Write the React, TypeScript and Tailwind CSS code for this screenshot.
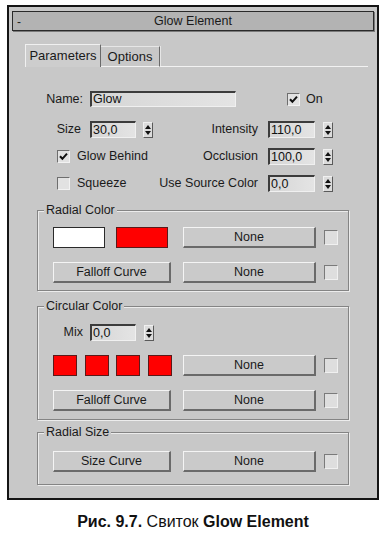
const ui = { fontFamily: '"Liberation Sans", Arial, sans-serif' };

function Check({ on = false }: { on?: boolean }) {
  return (
    <div className="w-[13px] h-[13px] shrink-0 border-t border-l border-[#6e6e6e] border-b border-r border-b-[#f2f2f2] border-r-[#f2f2f2] bg-[#e2e2e2] flex items-center justify-center">
      {on && (
        <svg width="9" height="9" viewBox="0 0 9 9">
          <path d="M1 4.2 L3.4 6.8 L8 1.6" stroke="#111" strokeWidth="2" fill="none" />
        </svg>
      )}
    </div>
  );
}

function Field({ value, w, h = 17 }: { value: string; w: number; h?: number }) {
  return (
    <div
      className="shrink-0 border-t-2 border-l-2 border-t-[#3c3c3c] border-l-[#3c3c3c] border-b border-r border-b-[#f0f0f0] border-r-[#f0f0f0] bg-gradient-to-r from-[#d6d6d6] to-[#e4e4e4] pl-[1px] flex items-center text-[12.5px] text-[#111] leading-none"
      style={{ width: w, height: h }}
    >
      {value}
    </div>
  );
}

function Spinner() {
  return (
    <div className="w-[10px] h-[16px] shrink-0 border-l border-t border-[#f0f0f0] border-r border-b border-r-[#5a5a5a] border-b-[#5a5a5a] bg-[#dcdcdc] flex flex-col items-center justify-center gap-[2px]">
      <svg width="6" height="4" viewBox="0 0 6 4">
        <path d="M3 0 L6 4 L0 4 Z" fill="#111" />
      </svg>
      <svg width="6" height="4" viewBox="0 0 6 4">
        <path d="M0 0 L6 0 L3 4 Z" fill="#111" />
      </svg>
    </div>
  );
}

function Button({ label, w }: { label: string; w: number }) {
  return (
    <div
      className="h-[21px] shrink-0 border-t border-l border-[#f4f4f4] border-r-2 border-b-2 border-r-[#6a6a6a] border-b-[#6a6a6a] bg-[#cacaca] flex items-center justify-center text-[12.5px] text-[#1a1a1a]"
      style={{ width: w }}
    >
      {label}
    </div>
  );
}

function Group({ title, children, className }: { title: string; children: React.ReactNode; className: string }) {
  return (
    <div className={`relative ml-[28px] w-[312px] border border-[#848484] shadow-[inset_1px_1px_0_#ececec,1px_1px_0_#ececec] ${className}`}>
      <span className="absolute left-[6px] -top-[8px] bg-[#c8c8c8] px-[2px] leading-[14px] text-[12.5px] text-[#1a1a1a]">
        {title}
      </span>
      {children}
    </div>
  );
}

function NoneRow({ gap = 12 }: { gap?: number }) {
  return (
    <>
      <div style={{ marginLeft: gap }}>
        <Button label="None" w={133} />
      </div>
      <div className="ml-[8px]">
        <div className="w-[14px] h-[15px] border-t border-l border-[#7a7a7a] border-b border-r border-b-[#f0f0f0] border-r-[#f0f0f0] bg-[#dedede]" />
      </div>
    </>
  );
}

export default function App() {
  return (
    <div className="w-[386px] h-[538px] bg-white overflow-hidden" style={ui}>
      <div className="ml-[7px] mt-[5px] w-[372px] h-[495px] border-2 border-[#151515] bg-[#c8c8c8] flex flex-col">
        {/* rollout header */}
        <div className="ml-[3px] mt-[4px] w-[362px] h-[20px] border border-[#2a2a2a] shadow-[1px_1px_0_#7a7a7a] bg-[#b3b3b3] flex items-center relative">
          <span className="absolute left-[4px] top-[1px] text-[12px] text-[#222]">-</span>
          <span className="w-full text-center text-[12.5px] text-[#1a1a1a]">Glow Element</span>
        </div>

        {/* tabs */}
        <div className="mt-[13px] ml-[16px] flex items-end h-[23px]">
          <div className="h-[23px] w-[76px] border-t border-l border-[#f0f0f0] border-r border-r-[#6a6a6a] bg-[#cdcdcd] flex items-center justify-center text-[13px] text-[#1a1a1a]">
            Parameters
          </div>
          <div className="h-[21px] w-[59px] border-t border-[#e6e6e6] border-r border-r-[#6a6a6a] border-b border-b-[#f2f2f2] flex items-center justify-center text-[13px] text-[#1a1a1a] shadow-[1px_0_0_#e6e6e6]">
            Options
          </div>
          <div className="h-[1px] w-[208px] bg-[#f2f2f2]" />
        </div>

        {/* Name row */}
        <div className="mt-[24px] h-[16px] flex items-center text-[12.5px] text-[#1a1a1a]">
          <span className="w-[77px] text-right pr-[3px]">Name:</span>
          <div className="ml-[4px]">
            <Field value="Glow" w={146} h={16} />
          </div>
          <div className="ml-[51px]">
            <Check on />
          </div>
          <span className="ml-[6px]">On</span>
        </div>

        {/* Size / Intensity */}
        <div className="mt-[14px] h-[17px] flex items-center text-[12.5px] text-[#1a1a1a]">
          <span className="w-[77px] text-right pr-[5px]">Size</span>
          <div className="ml-[4px]">
            <Field value="30,0" w={46} />
          </div>
          <div className="ml-[7px]">
            <Spinner />
          </div>
          <span className="w-[111px] text-right pr-[6px]">Intensity</span>
          <div className="ml-[4px]">
            <Field value="110,0" w={47} />
          </div>
          <div className="ml-[8px]">
            <Spinner />
          </div>
        </div>

        {/* Glow Behind / Occlusion */}
        <div className="mt-[10px] h-[17px] flex items-center text-[12.5px] text-[#1a1a1a]">
          <div className="w-[144px] flex items-center">
            <div className="ml-[48px]">
              <Check on />
            </div>
            <span className="ml-[7px]">Glow Behind</span>
          </div>
          <span className="w-[111px] text-right pr-[6px]">Occlusion</span>
          <div className="ml-[4px]">
            <Field value="100,0" w={47} />
          </div>
          <div className="ml-[8px]">
            <Spinner />
          </div>
        </div>

        {/* Squeeze / Use Source Color */}
        <div className="mt-[10px] h-[17px] flex items-center text-[12.5px] text-[#1a1a1a]">
          <div className="w-[144px] flex items-center">
            <div className="ml-[48px]">
              <Check />
            </div>
            <span className="ml-[7px]">Squeeze</span>
          </div>
          <span className="w-[111px] text-right pr-[6px]">Use Source Color</span>
          <div className="ml-[4px]">
            <Field value="0,0" w={47} />
          </div>
          <div className="ml-[8px]">
            <Spinner />
          </div>
        </div>

        {/* Radial Color */}
        <Group title="Radial Color" className="mt-[18px] pt-[16px] pb-[7px] pl-[15px]">
          <div className="flex items-center h-[21px]">
            <div className="w-[52px] h-[21px] bg-white border border-[#2a2a2a]" />
            <div className="ml-[11px] w-[52px] h-[21px] bg-[#ff0000] border border-[#5a1a1a]" />
            <NoneRow gap={15} />
          </div>
          <div className="mt-[14px] flex items-center h-[21px]">
            <Button label="Falloff Curve" w={118} />
            <NoneRow />
          </div>
        </Group>

        {/* Circular Color */}
        <Group title="Circular Color" className="mt-[15px] pt-[17px] pb-[8px] pl-[15px]">
          <div className="flex items-center h-[17px] text-[12.5px] text-[#1a1a1a]">
            <span className="w-[36px] text-right pr-[6px]">Mix</span>
            <div className="ml-[1px]">
              <Field value="0,0" w={46} />
            </div>
            <div className="ml-[8px]">
              <Spinner />
            </div>
          </div>
          <div className="mt-[14px] flex items-center h-[21px]">
            <div className="w-[24px] h-[21px] bg-[#ff0000] border border-[#5a1a1a]" />
            <div className="ml-[8px] w-[24px] h-[21px] bg-[#ff0000] border border-[#5a1a1a]" />
            <div className="ml-[7px] w-[24px] h-[21px] bg-[#ff0000] border border-[#5a1a1a]" />
            <div className="ml-[8px] w-[24px] h-[21px] bg-[#ff0000] border border-[#5a1a1a]" />
            <NoneRow gap={11} />
          </div>
          <div className="mt-[14px] flex items-center h-[21px]">
            <Button label="Falloff Curve" w={118} />
            <NoneRow />
          </div>
        </Group>

        {/* Radial Size */}
        <Group title="Radial Size" className="mt-[12px] pt-[18px] pb-[12px] pl-[15px]">
          <div className="flex items-center h-[21px]">
            <Button label="Size Curve" w={118} />
            <NoneRow />
          </div>
        </Group>
      </div>

      <p className="mt-[13px] text-center text-[16px] leading-[18px] text-[#111]">
        <b>Рис. 9.7.</b> Свиток <b>Glow Element</b>
      </p>
    </div>
  );
}
